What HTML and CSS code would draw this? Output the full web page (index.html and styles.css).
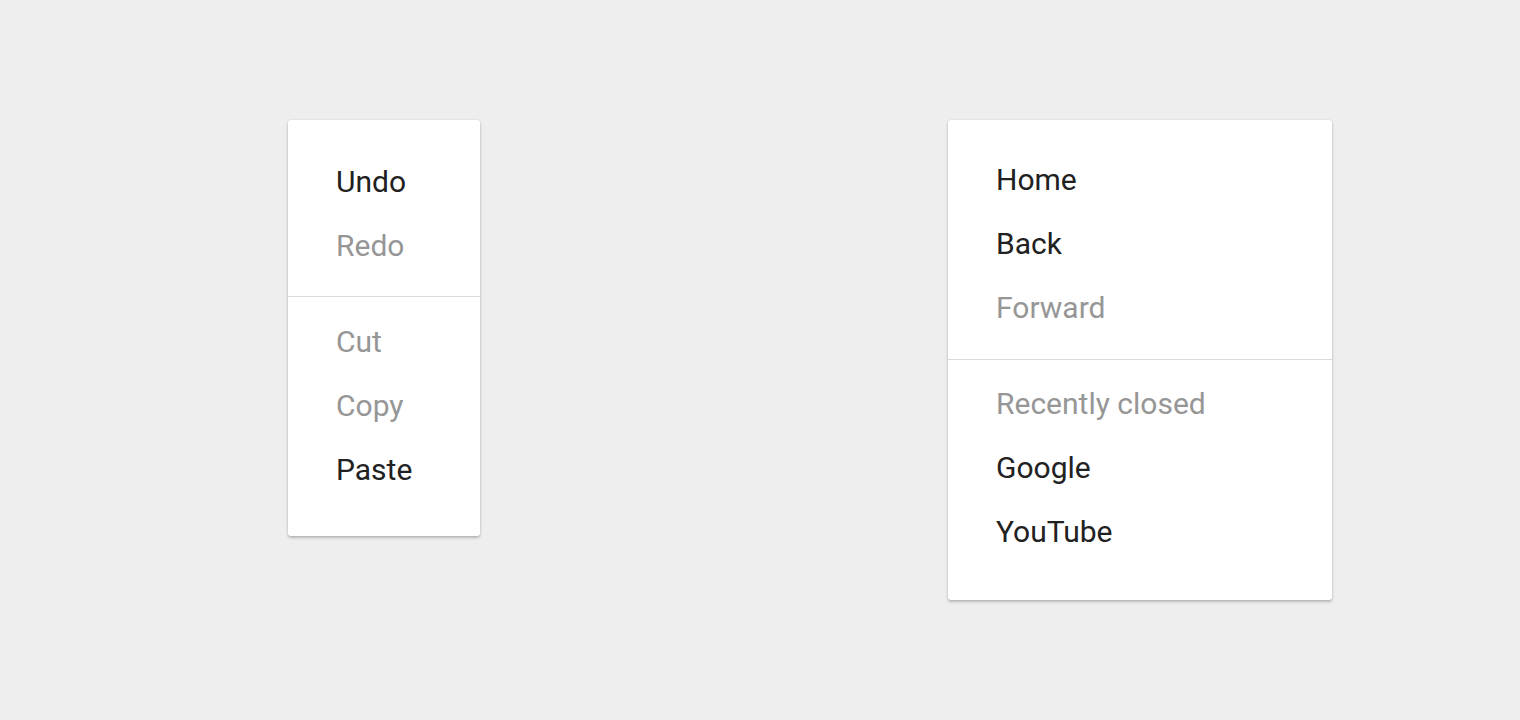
FILE: index.html
```html
<!DOCTYPE html>
<html>
<head>
<meta charset="utf-8">
<link rel="stylesheet" href="styles.css">
</head>
<body>
<div class="stage">
  <div class="menu menu-edit">
    <div class="group group-first">
      <div class="item">Undo</div>
      <div class="item disabled">Redo</div>
    </div>
    <div class="divider"></div>
    <div class="group group-last">
      <div class="item disabled">Cut</div>
      <div class="item disabled">Copy</div>
      <div class="item">Paste</div>
    </div>
  </div>
  <div class="menu menu-nav">
    <div class="group group-first">
      <div class="item">Home</div>
      <div class="item">Back</div>
      <div class="item disabled">Forward</div>
    </div>
    <div class="divider"></div>
    <div class="group group-last">
      <div class="item disabled">Recently closed</div>
      <div class="item">Google</div>
      <div class="item">YouTube</div>
    </div>
  </div>
</div>
</body>
</html>
```
FILE: styles.css
```css
html, body {
  margin: 0;
  padding: 0;
  background: #eeeeee;
  height: 100%;
}
body {
  font-family: Roboto, "Liberation Sans", sans-serif;
  overflow: hidden;
}
.stage {
  display: flex;
  align-items: flex-start;
  padding: 120px 0 0 288px;
  gap: 468px;
}
.menu {
  background: #ffffff;
  border-radius: 3px;
  box-shadow: 0 2px 3px rgba(0,0,0,0.22), 0 0 2px rgba(0,0,0,0.12);
  display: flex;
  flex-direction: column;
}
.menu-edit { width: 192px; }
.menu-nav { width: 384px; }
.item {
  height: 64px;
  line-height: 64px;
  padding: 0 48px;
  font-size: 30px;
  color: #212121;
  white-space: nowrap;
}
.item.disabled { color: #969696; }
.divider {
  height: 1px;
  background: #dadada;
}
.menu-edit .group-first { padding: 30px 0 18px; }
.menu-edit .group-last { padding: 13px 0 34px; }
.menu-nav .group-first { padding: 28px 0 19px; }
.menu-nav .group-last { padding: 12px 0 36px; }
```
